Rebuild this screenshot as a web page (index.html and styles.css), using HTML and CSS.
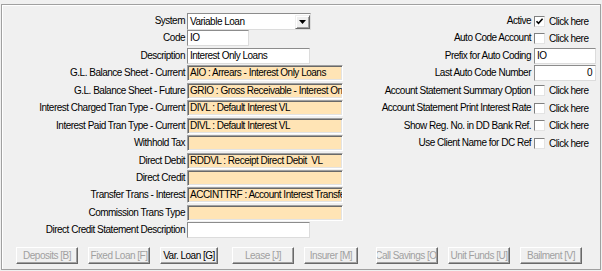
FILE: index.html
```html
<!DOCTYPE html>
<html>
<head>
<meta charset="utf-8">
<link rel="stylesheet" href="styles.css">
</head>
<body>
<div class="panel">
  <div class="cols">
    <div class="grid-left">
      <div class="lbl">System</div>
      <div class="combo"><span class="combo-text">Variable Loan</span><span class="dd"><svg width="7" height="4" viewBox="0 0 7 4"><path d="M0 0H7L3.5 4Z" fill="#000"/></svg></span></div>
      <div class="lbl">Code</div>
      <div class="fld w62">IO</div>
      <div class="lbl">Description</div>
      <div class="fld w123">Interest Only Loans</div>
      <div class="lbl">G.L. Balance Sheet - Current</div>
      <div class="fld orange">AIO : Arrears - Interest Only Loans</div>
      <div class="lbl">G.L. Balance Sheet - Future</div>
      <div class="fld orange">GRIO : Gross Receivable - Interest Only Loans</div>
      <div class="lbl">Interest Charged Tran Type - Current</div>
      <div class="fld orange">DIVL : Default Interest VL</div>
      <div class="lbl">Interest Paid Tran Type - Current</div>
      <div class="fld orange">DIVL : Default Interest VL</div>
      <div class="lbl">Withhold Tax</div>
      <div class="fld orange"></div>
      <div class="lbl">Direct Debit</div>
      <div class="fld orange">RDDVL : Receipt Direct Debit&nbsp; VL</div>
      <div class="lbl">Direct Credit</div>
      <div class="fld orange"></div>
      <div class="lbl">Transfer Trans - Interest</div>
      <div class="fld orange">ACCINTTRF : Account Interest Transfer</div>
      <div class="lbl">Commission Trans Type</div>
      <div class="fld orange"></div>
      <div class="lbl">Direct Credit Statement Description</div>
      <div class="fld w123"></div>
    </div>
    <div class="grid-right">
      <div class="lbl">Active</div>
      <div class="chk"><span class="box"><svg width="9" height="9" viewBox="0 0 9 9"><path d="M1.5 4.2L3.5 6.3L7.6 1.8" fill="none" stroke="#000" stroke-width="1.6"/></svg></span><span>Click here</span></div>
      <div class="lbl">Auto Code Account</div>
      <div class="chk"><span class="box"></span><span>Click here</span></div>
      <div class="lbl">Prefix for Auto Coding</div>
      <div class="fld w62">IO</div>
      <div class="lbl">Last Auto Code Number</div>
      <div class="fld w62 num">0</div>
      <div class="lbl">Account Statement Summary Option</div>
      <div class="chk"><span class="box"></span><span>Click here</span></div>
      <div class="lbl">Account Statement Print Interest Rate</div>
      <div class="chk"><span class="box"></span><span>Click here</span></div>
      <div class="lbl">Show Reg. No. in DD Bank Ref.</div>
      <div class="chk"><span class="box"></span><span>Click here</span></div>
      <div class="lbl">Use Client Name for DC Ref</div>
      <div class="chk"><span class="box"></span><span>Click here</span></div>
    </div>
  </div>
  <div class="buttons">
    <div class="btn"><span>Deposits [B]</span></div>
    <div class="btn"><span>Fixed Loan [F]</span></div>
    <div class="btn on w58"><span>Var. Loan [G]</span></div>
    <div class="btn"><span>Lease [J]</span></div>
    <div class="btn w54"><span>Insurer [M]</span></div>
    <div class="btn"><span>Call Savings [O]</span></div>
    <div class="btn"><span>Unit Funds [U]</span></div>
    <div class="btn"><span>Bailment [V]</span></div>
  </div>
</div>
</body>
</html>
```
FILE: styles.css
```css
html, body {
  margin: 0;
  padding: 0;
}
body {
  width: 602px;
  height: 271px;
  overflow: hidden;
  background: #f0f0f0;
  color: #000;
  font-family: "Liberation Sans", Arial, sans-serif;
  font-size: 10px;
  letter-spacing: -0.5px;
}
.panel {
  box-sizing: border-box;
  margin: 4px 0 0 1px;
  width: 600px;
  height: 266px;
  border: 1px solid #a0a0a0;
  box-shadow: inset 1px 1px #fff;
  padding-top: 8px;
}
.cols {
  display: flex;
}
.grid-left {
  display: grid;
  grid-template-columns: 182px 156px;
  column-gap: 2px;
  grid-auto-rows: 16px;
  row-gap: 1.45px;
  margin-left: 1px;
}
.grid-right {
  display: grid;
  grid-template-columns: 188px 62px;
  column-gap: 3px;
  grid-auto-rows: 16px;
  row-gap: 1.45px;
  align-content: start;
}
.lbl {
  display: flex;
  align-items: center;
  justify-content: flex-end;
  white-space: nowrap;
  line-height: 16px;
}
.fld {
  box-sizing: border-box;
  height: 16px;
  background: #fff;
  border: 1px solid;
  border-color: #8c8c8c #dcdcdc #dcdcdc #8c8c8c;
  padding: 0 2px;
  line-height: 14px;
  white-space: nowrap;
  overflow: hidden;
}
.w62 { width: 62px; }
.w123 { width: 123px; }
.num { text-align: right; padding-right: 3px; }
.orange {
  width: 156px;
  background: #ffe4b5;
  border-color: #a0a0a0 #ffffff #ffffff #a0a0a0;
  box-shadow: inset 1px 1px #696969, inset -1px -1px #e3e3e3;
  padding-left: 2px;
  line-height: 14px;
}
.combo {
  box-sizing: border-box;
  width: 124px;
  height: 17px;
  background: #fff;
  border: 1px solid;
  border-color: #8c8c8c #dcdcdc #dcdcdc #8c8c8c;
  display: flex;
  align-items: stretch;
}
.combo-text {
  flex: 1;
  padding-left: 2px;
  line-height: 15px;
  white-space: nowrap;
}
.dd {
  box-sizing: border-box;
  width: 15px;
  margin: 1px 0 0 0;
  height: 14px;
  background: #f0f0f0;
  border: 1px solid;
  border-color: #f0f0f0 #696969 #696969 #f0f0f0;
  box-shadow: inset 1px 1px #fff, inset -1px -1px #a0a0a0;
  display: flex;
  align-items: center;
  justify-content: center;
}
.chk {
  display: flex;
  align-items: center;
  gap: 4px;
  white-space: nowrap;
}
.box {
  box-sizing: border-box;
  width: 11px;
  height: 11px;
  background: #fff;
  border: 1px solid;
  border-color: #808080 #e3e3e3 #e3e3e3 #808080;
  display: flex;
  align-items: center;
  justify-content: center;
}
.buttons {
  display: grid;
  grid-template-columns: repeat(8, 72px);
  margin-top: 8.6px;
  padding-left: 14px;
}
.btn {
  box-sizing: border-box;
  width: 62px;
  height: 17px;
  background: #f0f0f0;
  border: 1px solid;
  border-color: #ffffff #696969 #696969 #ffffff;
  box-shadow: inset -1px -1px #a0a0a0;
  color: #a0a0a0;
  display: flex;
  align-items: center;
  justify-content: center;
  overflow: hidden;
  white-space: nowrap;
}
.btn span {
  flex: none;
}
.btn.on { color: #000; }
.btn.w58 { width: 58px; }
.btn.w54 { width: 54px; }
```
